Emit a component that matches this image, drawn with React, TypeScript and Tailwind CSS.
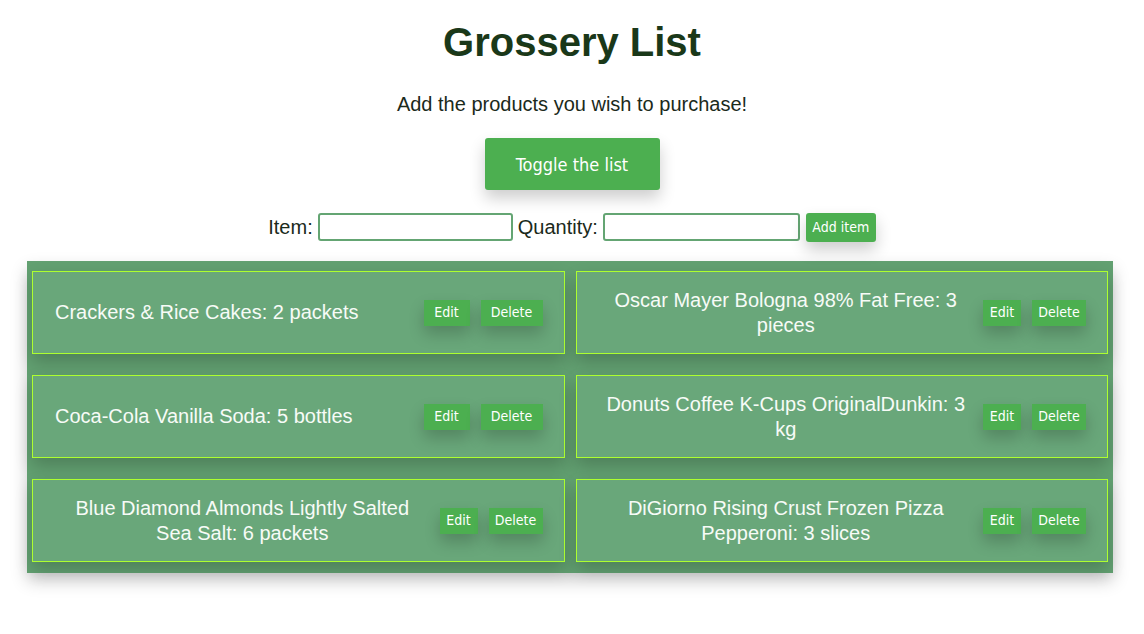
const items = [
  { name: "Crackers & Rice Cakes", qty: "2 packets", wrap: false },
  { name: "Oscar Mayer Bologna 98% Fat Free", qty: "3 pieces", wrap: true },
  { name: "Coca-Cola Vanilla Soda", qty: "5 bottles", wrap: false },
  { name: "Donuts Coffee K-Cups OriginalDunkin", qty: "3 kg", wrap: true },
  { name: "Blue Diamond Almonds Lightly Salted Sea Salt", qty: "6 packets", wrap: true },
  { name: "DiGiorno Rising Crust Frozen Pizza Pepperoni", qty: "3 slices", wrap: true },
];

const tahoma = "font-['DejaVu_Sans_Condensed','Roboto',sans-serif]";

function Item({ name, qty, wrap }: { name: string; qty: string; wrap: boolean }) {
  return (
    <div className="flex h-[83px] items-center justify-between border border-[#adff2f] bg-[#69a77a] pl-[22px] pr-[21px] shadow-[0_8px_16px_0_rgba(0,0,0,0.2)]">
      <p className={`text-center text-[20px] leading-[25px] text-[#f7fbf7] ${wrap ? "flex-1" : ""}`}>
        {name}: {qty}
      </p>
      <div className="ml-[10px] flex shrink-0 items-center gap-[11px]">
        <button
          className={`h-[26px] ${wrap ? "w-[38px]" : "w-[46px]"} bg-[#4caf50] text-[14px] text-white shadow-[0_8px_16px_0_rgba(0,0,0,0.2)] ${tahoma}`}
        >
          Edit
        </button>
        <button
          className={`h-[26px] ${wrap ? "w-[54px]" : "w-[62px]"} bg-[#4caf50] text-[14px] text-white shadow-[0_8px_16px_0_rgba(0,0,0,0.2)] ${tahoma}`}
        >
          Delete
        </button>
      </div>
    </div>
  );
}

export default function App() {
  return (
    <div className="min-h-screen bg-white font-['Liberation_Sans',Arial,sans-serif]">
      <div className="flex flex-col items-center pt-[19px]">
        <h1 className="text-[40px] font-bold leading-[46px] text-[#1a3819]">Grossery List</h1>
        <p className="mt-[27px] text-[20px] leading-[24px] text-[#1b2a1b]">
          Add the products you wish to purchase!
        </p>
        <button
          className={`mt-[22px] h-[52px] w-[175px] rounded-[3px] bg-[#4caf50] text-[18px] text-white shadow-[0_8px_16px_0_rgba(0,0,0,0.2)] ${tahoma}`}
        >
          Toggle the list
        </button>
        <div className="mt-[22px] flex items-center text-[20px] text-[#1b2a1b]">
          <label>Item:</label>
          <input className="ml-[5px] h-[28px] w-[195px] rounded-[3px] border-2 border-[#64a573] bg-white outline-none" />
          <label className="ml-[5px]">Quantity:</label>
          <input className="ml-[5px] h-[28px] w-[197px] rounded-[3px] border-2 border-[#64a573] bg-white outline-none" />
          <button
            className={`ml-[6px] h-[29px] w-[70px] rounded-[3px] bg-[#4caf50] text-[14px] text-white shadow-[0_8px_16px_0_rgba(0,0,0,0.2)] ${tahoma}`}
          >
            Add item
          </button>
        </div>
      </div>
      <div className="mx-[27px] mt-[19px] grid w-[1086px] grid-cols-2 gap-x-[11px] gap-y-[21px] bg-[#62a071] px-[5px] pb-[11px] pt-[10px] shadow-[0_8px_16px_0_rgba(0,0,0,0.2)]">
        {items.map((it) => (
          <Item key={it.name} {...it} />
        ))}
      </div>
    </div>
  );
}
